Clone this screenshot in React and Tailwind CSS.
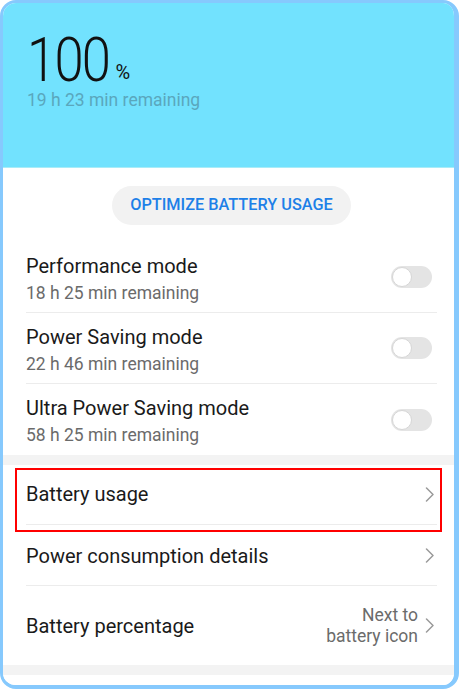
const modes = [
  { title: "Performance mode", sub: "18 h 25 min remaining" },
  { title: "Power Saving mode", sub: "22 h 46 min remaining" },
  { title: "Ultra Power Saving mode", sub: "58 h 25 min remaining" },
];

const Toggle = () => (
  <div className="w-[41px] h-[22px] rounded-full bg-[#e4e4e4] flex items-center px-[1px]">
    <div className="w-[20px] h-[20px] rounded-full bg-white border border-[#d6d6d6]" />
  </div>
);

const Chevron = () => (
  <svg width="10" height="15" viewBox="0 0 10 15" fill="none" className="shrink-0">
    <path d="M1.5 1 L8 7.5 L1.5 14" stroke="#9a9a9a" strokeWidth="1.5" strokeLinecap="round" strokeLinejoin="round" />
  </svg>
);

const App = () => {
  return (
    <div
      className="w-[459px] h-[689px] border-l-[3px] border-r-[5px] border-t-[3px] border-b-[4px] border-[#86c9fd] rounded-[16px] overflow-hidden bg-white flex flex-col"
      style={{ fontFamily: "Roboto, 'Noto Sans', sans-serif" }}
    >
      {/* Header */}
      <div className="h-[165px] shrink-0 bg-[#72e2fe] border-b border-[#a9ecf8] pl-[24px] pt-[30px] flex flex-col">
        <div className="flex items-end text-[#111]">
          <span className="text-[61px] font-light leading-[54px] tracking-[-2px] inline-block scale-x-[0.86] origin-left -mr-[12px]">100</span>
          <span className="text-[20px] leading-[24px] ml-[5px] mb-[3px]">%</span>
        </div>
        <div className="text-[17.5px] leading-[26px] text-[#5aa7bd]">19 h 23 min remaining</div>
      </div>

      {/* Optimize button */}
      <div className="flex justify-center pt-[18px] pb-[17px]">
        <div className="ml-[6px] h-[39px] px-[18px] rounded-full bg-[#f2f2f2] flex items-center text-[16.3px] font-medium text-[#1d80e8]">
          OPTIMIZE BATTERY USAGE
        </div>
      </div>

      {/* Modes */}
      <div className="pl-[23px] pr-[17px]">
        {modes.map((m, i) => (
          <div
            key={m.title}
            className={`h-[71px] flex items-center justify-between ${i < modes.length - 1 ? "border-b border-[#ececec]" : ""}`}
          >
            <div className="flex flex-col pt-[3px]">
              <span className="text-[20px] text-[#1a1a1a] leading-[26px]">{m.title}</span>
              <span className="text-[17.5px] text-[#6b6b6b] leading-[24px] mt-[2px]">{m.sub}</span>
            </div>
            <div className="mr-[5px]">
              <Toggle />
            </div>
          </div>
        ))}
      </div>

      <div className="h-[10px] shrink-0 bg-[#f3f3f3]" />

      {/* Links */}
      <div className="pl-[23px] pr-[17px]">
        <div className="relative h-[60px] flex items-center justify-between border-b border-[#ececec] pr-[2px]">
          <span className="text-[20px] text-[#1a1a1a] -mt-[1px]">Battery usage</span>
          <Chevron />
          <div className="absolute left-[-11px] right-[-5px] top-[3px] bottom-[-8px] border-2 border-[#ff0000] pointer-events-none" />
        </div>
        <div className="h-[61px] flex items-center justify-between border-b border-[#ececec] pr-[2px]">
          <span className="text-[20px] text-[#1a1a1a] pt-[2px]">Power consumption details</span>
          <Chevron />
        </div>
        <div className="h-[79px] flex items-center justify-between pr-[2px]">
          <span className="text-[20px] text-[#1a1a1a]">Battery percentage</span>
          <div className="flex items-center gap-[7px]">
            <div className="text-right text-[17.5px] text-[#6b6b6b] leading-[21px]">
              Next to
              <br />
              battery icon
            </div>
            <Chevron />
          </div>
        </div>
      </div>

      <div className="h-[10px] shrink-0 bg-[#f3f3f3]" />
      <div className="flex-1 bg-white" />
    </div>
  );
};

export default App;
